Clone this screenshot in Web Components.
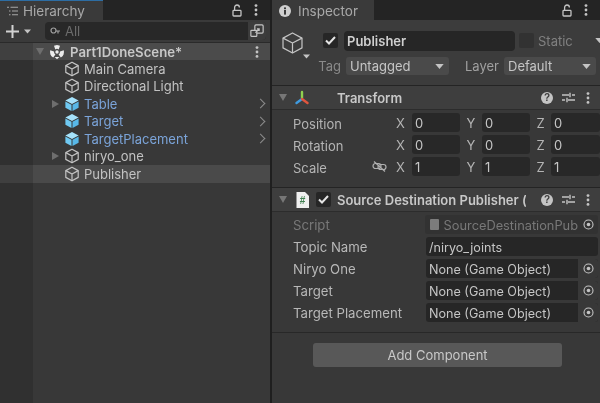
<!DOCTYPE html>
<html>
<head>
<meta charset="utf-8">
<style>
    html, body {
        margin: 0;
        width: 600px;
        height: 403px;
        overflow: hidden;
        background: #1f1f1f;
    }
</style>
</head>
<body>
<unity-editor>
    <hierarchy-panel slot="left">
        <tree-row kind="plain">Main Camera</tree-row>
        <tree-row kind="plain">Directional Light</tree-row>
        <tree-row kind="prefab" arrow more>Table</tree-row>
        <tree-row kind="prefab" more>Target</tree-row>
        <tree-row kind="prefab" more>TargetPlacement</tree-row>
        <tree-row kind="plain" arrow>niryo_one</tree-row>
        <tree-row kind="plain" selected>Publisher</tree-row>
    </hierarchy-panel>
    <inspector-panel slot="right">
        <component-header icon="transform" name="Transform"></component-header>
        <comp-body>
            <vector-row label="Position" x="0" y="0" z="0"></vector-row>
            <vector-row label="Rotation" x="0" y="0" z="0"></vector-row>
            <vector-row label="Scale" x="1" y="1" z="1" link></vector-row>
        </comp-body>
        <component-header icon="script" name="Source Destination Publisher (" toggle></component-header>
        <comp-body>
            <field-row label="Script" value="SourceDestinationPub" type="script"></field-row>
            <field-row label="Topic Name" value="/niryo_joints" type="text"></field-row>
            <field-row label="Niryo One" value="None (Game Object)" type="object"></field-row>
            <field-row label="Target" value="None (Game Object)" type="object"></field-row>
            <field-row label="Target Placement" value="None (Game Object)" type="object"></field-row>
        </comp-body>
    </inspector-panel>
</unity-editor>

<script>
const FONT = `Inter, "Liberation Sans", sans-serif`;

// iconos compartidos
const cube = (w, h) => `<svg width="${w}" height="${h}" viewBox="0 0 16 16" fill="none" stroke="#c4c4c4" stroke-width="1.2" stroke-linejoin="round">
    <path d="M8 1.2 14.2 4.6V11.4L8 14.8 1.8 11.4V4.6Z"/><path d="M1.8 4.6 8 8 14.2 4.6M8 8V14.8"/></svg>`;
const prefab = `<svg width="16" height="16" viewBox="0 0 16 16">
    <path d="M8 1 14.6 4.5 8 8 1.4 4.5Z" fill="#a5e2fb"/><path d="M1.4 5.4 7.5 8.7V15L1.4 11.7Z" fill="#6fc9f2"/><path d="M14.6 5.4 8.5 8.7V15L14.6 11.7Z" fill="#58b8e8"/></svg>`;
const kebab = `<svg width="4" height="12" viewBox="0 0 4 12" fill="#c4c4c4"><circle cx="2" cy="1.6" r="1.4"/><circle cx="2" cy="6" r="1.4"/><circle cx="2" cy="10.4" r="1.4"/></svg>`;
const lock = `<svg width="10" height="13" viewBox="0 0 10 13" fill="none" stroke="#c4c4c4" stroke-width="1.3"><path d="M2.6 6V3.4A2.4 2.4 0 0 1 7.4 3.4"/><rect x="1" y="6.4" width="8" height="5.6" rx=".8"/></svg>`;
const target = `<svg width="11" height="11" viewBox="0 0 11 11" fill="none" stroke="#c4c4c4"><circle cx="5.5" cy="5.5" r="4.5" stroke-width="1.1"/><circle cx="5.5" cy="5.5" r="1.8" fill="#c4c4c4" stroke="none"/></svg>`;
const caret = `<svg width="9" height="5" viewBox="0 0 10 6" fill="#c4c4c4"><path d="M0 0H10L5 6Z"/></svg>`;
const check = `<svg width="11" height="9" viewBox="0 0 11 9" fill="none" stroke="#e4e4e4" stroke-width="2"><path d="M1 4.5 4 7.5 10 1"/></svg>`;

class PanelTab extends HTMLElement {
    constructor() {
        super();
        this.attachShadow({ mode: 'open' }).innerHTML = `
            <style>
                :host {
                    display: flex;
                    align-items: center;
                    height: 20px;
                    background: #242424;
                    color: #a8a8a8;
                    font: 13.5px ${FONT};
                }
                .tab {
                    display: flex;
                    align-items: center;
                    gap: var(--tab-gap, 5px);
                    height: 100%;
                    box-sizing: border-box;
                    padding-left: 7px;
                    width: var(--tab-width, 103px);
                    background: #3a3a3a;
                    border-top: 1px solid var(--tab-top, #3a3a3a);
                }
                .tools {
                    margin-left: auto;
                    display: flex;
                    align-items: center;
                    gap: 12px;
                    padding-right: 12px;
                }
            </style>
            <div class="tab"><slot name="icon"></slot><slot></slot></div>
            <div class="tools">${lock}${kebab}</div>
        `;
    }
}

class TreeRow extends HTMLElement {
    constructor() {
        super();
        const kind = this.getAttribute('kind');
        this.attachShadow({ mode: 'open' }).innerHTML = `
            <style>
                :host {
                    display: flex;
                    align-items: center;
                    height: 17.5px;
                    padding-left: 64px;
                    position: relative;
                    color: ${kind === 'prefab' ? '#7ba4d9' : '#c2c2c2'};
                    font: 13px ${FONT};
                }
                :host([selected]) { background: #4a4a4a; }
                .icon { display: flex; margin-right: 4px; }
                .arrow {
                    position: absolute;
                    left: 52px;
                    width: 0;
                    height: 0;
                    border-left: 7px solid #6e6e6e;
                    border-top: 4.5px solid transparent;
                    border-bottom: 4.5px solid transparent;
                }
                .more {
                    position: absolute;
                    left: 257px;
                    width: 6px;
                    height: 6px;
                    border-top: 1.5px solid #8c8c8c;
                    border-right: 1.5px solid #8c8c8c;
                    transform: rotate(45deg);
                }
            </style>
            ${this.hasAttribute('arrow') ? '<span class="arrow"></span>' : ''}
            <span class="icon">${kind === 'prefab' ? prefab : cube(16, 16)}</span>
            <slot></slot>
            ${this.hasAttribute('more') ? '<span class="more"></span>' : ''}
        `;
    }
}

class HierarchyPanel extends HTMLElement {
    constructor() {
        super();
        this.attachShadow({ mode: 'open' }).innerHTML = `
            <style>
                :host {
                    display: flex;
                    flex-direction: column;
                    height: 100%;
                    background: #383838;
                    font: 13px ${FONT};
                    position: relative;
                }
                panel-tab { --tab-top: #2d6da3; }
                .toolbar {
                    display: flex;
                    align-items: center;
                    height: 23px;
                    padding: 0 4px 0 6px;
                    gap: 6px;
                    background: #3a3a3a;
                    border-bottom: 1px solid #2a2a2a;
                    box-sizing: border-box;
                }
                .add { display: flex; align-items: center; gap: 5px; width: 33px; }
                .search {
                    flex: 1;
                    display: flex;
                    align-items: center;
                    gap: 4px;
                    height: 18px;
                    padding-left: 5px;
                    background: #282828;
                    border-radius: 4px;
                    color: #6b6b6b;
                }
                .glass {
                    display: flex;
                    align-items: center;
                    justify-content: center;
                    margin-left: auto;
                    width: 18px;
                    height: 18px;
                    background: #3c3c3c;
                    border-radius: 0 4px 4px 0;
                }
                .scene {
                    display: flex;
                    align-items: center;
                    height: 17px;
                    padding-left: 36px;
                    background: #4b4b4b;
                    color: #c8c8c8;
                    font-weight: 600;
                    font-size: 13.2px;
                    gap: 5px;
                }
                .scene .tri {
                    width: 0;
                    height: 0;
                    border-top: 7px solid #6e6e6e;
                    border-left: 4.5px solid transparent;
                    border-right: 4.5px solid transparent;
                }
                .scene .k { margin-left: auto; margin-right: 11px; display: flex; }
                .gutter {
                    position: absolute;
                    left: 0;
                    top: 43px;
                    bottom: 0;
                    width: 33px;
                    background: rgba(0, 0, 0, .14);
                    pointer-events: none;
                }
            </style>
            <panel-tab>
                <svg slot="icon" width="11" height="10" viewBox="0 0 11 10" stroke="#a8a8a8" stroke-width="1.1"><path d="M0 1.2H2M3.5 1.2H11M2 5H3.5M5 5H11M2 8.8H3.5M5 8.8H11"/></svg>
                Hierarchy
            </panel-tab>
            <div class="toolbar">
                <div class="add">
                    <svg width="13" height="13" viewBox="0 0 13 13" stroke="#d2d2d2" stroke-width="2"><path d="M6.5 0V13M0 6.5H13"/></svg>
                    <svg width="7" height="5" viewBox="0 0 10 6" fill="#c4c4c4"><path d="M0 0H10L5 6Z"/></svg>
                </div>
                <div class="search">
                    <svg width="11" height="9" viewBox="0 0 11 9" fill="none" stroke="#a0a0a0" stroke-width="1.2"><circle cx="3.5" cy="3.5" r="2.5"/><path d="M6 4H10M8 4V6.5"/></svg>
                    All
                    <span class="glass"><svg width="14" height="14" viewBox="0 0 13 13" fill="none" stroke="#c4c4c4" stroke-width="1.1"><rect x="4.5" y=".8" width="7.7" height="7.7" rx="1"/><rect x=".8" y="6" width="5.5" height="5.5" rx=".6" fill="#3c3c3c"/><path d="M5 8 8.5 4.5M6.5 4.5H8.5V6.5"/></svg></span>
                </div>
            </div>
            <div class="scene">
                <span class="tri"></span>
                <svg width="16" height="16" viewBox="0 0 16 16" fill="#ececec"><circle cx="8" cy="8" r="1.7"/><path d="M8 1 11 1.7 9.7 5.4A3 3 0 0 0 6.3 5.4L5 1.7ZM1.2 6.2 5 7.5A3 3 0 0 0 6.4 10.4L4.2 13.6A7 7 0 0 1 1.2 6.2ZM14.8 6.2A7 7 0 0 1 11.8 13.6L9.6 10.4A3 3 0 0 0 11 7.5Z"/><path d="M5.6 13 8 15.2 10.4 13Z"/></svg>
                Part1DoneScene*
                <span class="k">${kebab}</span>
            </div>
            <slot></slot>
            <div class="gutter"></div>
        `;
    }
}

class ComponentHeader extends HTMLElement {
    constructor() {
        super();
        const icon = this.getAttribute('icon') === 'transform'
            ? `<svg width="16" height="16" viewBox="0 0 16 16" fill="none" stroke-width="2.4" stroke-linecap="round"><path d="M8 8V2" stroke="#8fd14f"/><path d="M8 9 2.5 13" stroke="#3f9be0"/><path d="M8 9 13.5 13" stroke="#e0563f"/></svg>`
            : `<svg width="13" height="16" viewBox="0 0 13 16"><path d="M.5 0H9L13 4V16H.5Z" fill="#efefef"/><text x="6.5" y="12" text-anchor="middle" font-family="Liberation Sans" font-size="10" font-weight="700" fill="#3f7f4f">#</text></svg>`;
        const toggle = this.hasAttribute('toggle')
            ? `<span class="box">${check}</span>` : '';
        this.attachShadow({ mode: 'open' }).innerHTML = `
            <style>
                :host {
                    display: flex;
                    align-items: center;
                    height: 23px;
                    padding-left: 7px;
                    background: #3e3e3e;
                    border-top: 1px solid #242424;
                    border-bottom: 1px solid #2c2c2c;
                    color: #c8c8c8;
                    font: 600 13px ${FONT};
                    white-space: nowrap;
                }
                .tri {
                    width: 0;
                    height: 0;
                    margin-right: 7px;
                    border-top: 7px solid #777;
                    border-left: 4.5px solid transparent;
                    border-right: 4.5px solid transparent;
                }
                .icon { display: flex; width: 16px; justify-content: center; margin-right: 6px; }
                .box {
                    display: flex;
                    align-items: center;
                    justify-content: center;
                    width: 15px;
                    height: 15px;
                    background: #262626;
                    border-radius: 2px;
                    margin-right: 6px;
                }
                .name { overflow: hidden; width: 189px; }
                .plain { margin-left: 21px; }
                .tools { margin-left: auto; display: flex; align-items: center; padding-right: 10px; }
                .help {
                    width: 12px;
                    height: 12px;
                    border-radius: 50%;
                    background: #c4c4c4;
                    color: #3e3e3e;
                    font: 700 10px/12px "Liberation Sans", sans-serif;
                    text-align: center;
                    margin-right: 9px;
                }
                .sliders { margin-right: 11px; }
            </style>
            <span class="tri"></span>
            <span class="icon">${icon}</span>
            ${toggle}
            <span class="name ${toggle ? '' : 'plain'}">${this.getAttribute('name')}</span>
            <span class="tools">
                <span class="help">?</span>
                <svg class="sliders" width="13" height="11" viewBox="0 0 13 11" stroke="#c4c4c4" stroke-width="1.4"><path d="M0 3H7M10 3H13M0 8H3M6 8H13M8 .8V5.2M5 5.8V10.2"/></svg>
                ${kebab}
            </span>
        `;
    }
}

class CompBody extends HTMLElement {
    constructor() {
        super();
        this.attachShadow({ mode: 'open' }).innerHTML = `
            <style>
                :host {
                    display: block;
                    padding: 3px 0 0;
                }
                :host(:not(:last-child)) { padding-bottom: 8px; }
            </style>
            <slot></slot>
        `;
    }
}

class VectorRow extends HTMLElement {
    constructor() {
        super();
        const axis = (a) => `<span class="axis ${a}">${a.toUpperCase()}</span><span class="num">${this.getAttribute(a)}</span>`;
        this.attachShadow({ mode: 'open' }).innerHTML = `
            <style>
                :host {
                    display: grid;
                    grid-template-columns: 78px 25px 16px 48px 22px 48px 21px 49px;
                    align-items: center;
                    height: 19px;
                    margin-bottom: 3px;
                    padding-left: 21px;
                    color: #b4b4b4;
                    font: 13px ${FONT};
                }
                .link { display: flex; justify-content: flex-end; padding-right: 9px; }
                .axis { text-align: center; padding-top: 1px; }
                .axis.x { text-align: left; }
                .num {
                    box-sizing: border-box;
                    height: 19px;
                    line-height: 21px;
                    padding-left: 3px;
                    background: #282828;
                    border-radius: 3px;
                    color: #c6c6c6;
                }
                .label { padding-top: 2px; }
            </style>
            <span class="label">${this.getAttribute('label')}</span>
            <span class="link">${this.hasAttribute('link') ? `<svg width="15" height="11" viewBox="0 0 15 11" fill="none" stroke="#b0b0b0" stroke-width="1.2"><rect x="1" y="2.5" width="8" height="5" rx="2.5"/><rect x="6" y="3.5" width="8" height="5" rx="2.5"/><path d="M2 .5 13 10.5"/></svg>` : ''}</span>
            ${axis('x')}${axis('y')}${axis('z')}
        `;
    }
}

class FieldRow extends HTMLElement {
    constructor() {
        super();
        const type = this.getAttribute('type');
        const dim = type === 'script';
        this.attachShadow({ mode: 'open' }).innerHTML = `
            <style>
                :host {
                    display: flex;
                    align-items: center;
                    height: 19px;
                    margin-bottom: 3px;
                    padding-left: 21px;
                    color: ${dim ? '#787878' : '#b8b8b8'};
                    font: 13.2px ${FONT};
                    white-space: nowrap;
                }
                .label { width: 133px; padding-top: 1px; }
                .field {
                    flex: 1;
                    display: flex;
                    align-items: center;
                    height: 19px;
                    margin-right: 2px;
                    padding-left: 3px;
                    background: ${dim ? '#323232' : '#262626'};
                    border-radius: 3px;
                    color: ${dim ? '#787878' : '#c6c6c6'};
                    font-size: ${dim ? '12.8px' : '12.6px'};
                }
                .text { flex: 1; padding-top: 1px; }
                .pick {
                    display: flex;
                    align-items: center;
                    justify-content: center;
                    width: 20px;
                    height: 100%;
                    background: ${dim ? 'transparent' : '#383838'};
                    border-radius: 0 3px 3px 0;
                }
                .doc { width: 9px; height: 11px; background: #7c7c7c; margin: 0 5px 0 2px; flex: none; border-radius: 1px; }
            </style>
            <span class="label">${this.getAttribute('label')}</span>
            <span class="field">
                ${dim ? '<span class="doc"></span>' : ''}
                <span class="text">${this.getAttribute('value')}</span>
                ${type === 'text' ? '' : `<span class="pick">${target}</span>`}
            </span>
        `;
    }
}

class InspectorPanel extends HTMLElement {
    constructor() {
        super();
        this.attachShadow({ mode: 'open' }).innerHTML = `
            <style>
                :host {
                    display: flex;
                    flex-direction: column;
                    height: 100%;
                    background: #383838;
                    color: #b4b4b4;
                    font: 13px ${FONT};
                }
                panel-tab { --tab-width: 102px; --tab-gap: 7px; }
                .head {
                    display: grid;
                    grid-template-columns: 47px 1fr;
                    height: 65px;
                    box-sizing: border-box;
                    padding: 9px 0 0 9px;
                    background: #3c3c3c;
                }
                .obj { position: relative; display: flex; align-items: flex-start; padding-top: 2px; }
                .obj .c { position: absolute; left: 22px; top: 25px; display: flex; }
                .line { display: flex; align-items: center; }
                .top { height: 23px; gap: 6px; margin-left: -5px; }
                .box { display: flex; align-items: center; justify-content: center; width: 15px; height: 15px; background: #262626; border-radius: 2px; }
                .name {
                    width: 168px;
                    height: 20px;
                    line-height: 20px;
                    padding-left: 3px;
                    background: #262626;
                    border-radius: 4px;
                    color: #cfcfcf;
                    font-weight: 600;
                }
                .stat { margin-left: -2px; color: #808080; }
                .stat-box { background: #323232; margin-left: -2px; }
                .bottom { height: 22px; margin-top: 3px; margin-left: -9px; }
                .tag { width: 29px; color: #8a8a8a; margin-left: -7px; text-align: right; }
                .layer { margin-left: 16px; color: #a0a0a0; }
                .drop {
                    display: flex;
                    align-items: center;
                    justify-content: space-between;
                    box-sizing: border-box;
                    height: 18px;
                    padding: 0 5px 0 4px;
                    background: #4a4a4a;
                    border-radius: 3px;
                    color: #c6c6c6;
                    font-size: 13px;
                }
                .foot {
                    margin-top: 7px;
                    border-top: 1px solid #282828;
                    padding: 10px 0 0 3px;
                    display: flex;
                    justify-content: center;
                }
                .add {
                    width: 249px;
                    height: 24px;
                    line-height: 24px;
                    text-align: center;
                    background: #585858;
                    border-radius: 3px;
                    color: #c8c8c8;
                }
            </style>
            <panel-tab>
                <svg slot="icon" width="12" height="12" viewBox="0 0 12 12"><circle cx="6" cy="6" r="6" fill="#cfcfcf"/><rect x="5" y="5" width="2" height="4.6" fill="#3a3a3a"/><rect x="5" y="2.4" width="2" height="1.8" fill="#3a3a3a"/></svg>
                Inspector
            </panel-tab>
            <div class="head">
                <div class="obj">
                    <svg width="23" height="24" viewBox="0 0 16 16" fill="none" stroke="#c4c4c4" stroke-width=".85" stroke-linejoin="round"><path d="M8 1 14.6 4.6V11.4L8 15 1.4 11.4V4.6Z"/><path d="M1.4 4.6 8 8 14.6 4.6M8 8V15"/></svg>
                    <span class="c"><svg width="7" height="5" viewBox="0 0 10 6" fill="#c4c4c4"><path d="M0 0H10L5 6Z"/></svg></span>
                </div>
                <div>
                    <div class="line top">
                        <span class="box">${check}</span>
                        <span class="name">Publisher</span>
                        <span class="box stat-box"></span>
                        <span class="stat">Static</span>
                        <span style="margin-left:16px;display:flex">${caret}</span>
                    </div>
                    <div class="line bottom">
                        <span class="tag">Tag</span>
                        <span class="drop" style="width:103px;margin-left:5px">Untagged ${caret}</span>
                        <span class="layer">Layer</span>
                        <span class="drop" style="width:92px;margin-left:5px">Default ${caret}</span>
                    </div>
                </div>
            </div>
            <slot></slot>
            <div class="foot"><div class="add">Add Component</div></div>
        `;
    }
}

class UnityEditor extends HTMLElement {
    constructor() {
        super();
        this.attachShadow({ mode: 'open' }).innerHTML = `
            <style>
                :host {
                    display: grid;
                    grid-template-columns: 270px 328px;
                    column-gap: 2px;
                    width: 600px;
                    height: 403px;
                    background: #1f1f1f;
                    overflow: hidden;
                    filter: blur(.45px);
                }
            </style>
            <slot name="left"></slot>
            <slot name="right"></slot>
        `;
    }
}

customElements.define('panel-tab', PanelTab);
customElements.define('tree-row', TreeRow);
customElements.define('hierarchy-panel', HierarchyPanel);
customElements.define('component-header', ComponentHeader);
customElements.define('comp-body', CompBody);
customElements.define('vector-row', VectorRow);
customElements.define('field-row', FieldRow);
customElements.define('inspector-panel', InspectorPanel);
customElements.define('unity-editor', UnityEditor);
</script>
</body>
</html>
